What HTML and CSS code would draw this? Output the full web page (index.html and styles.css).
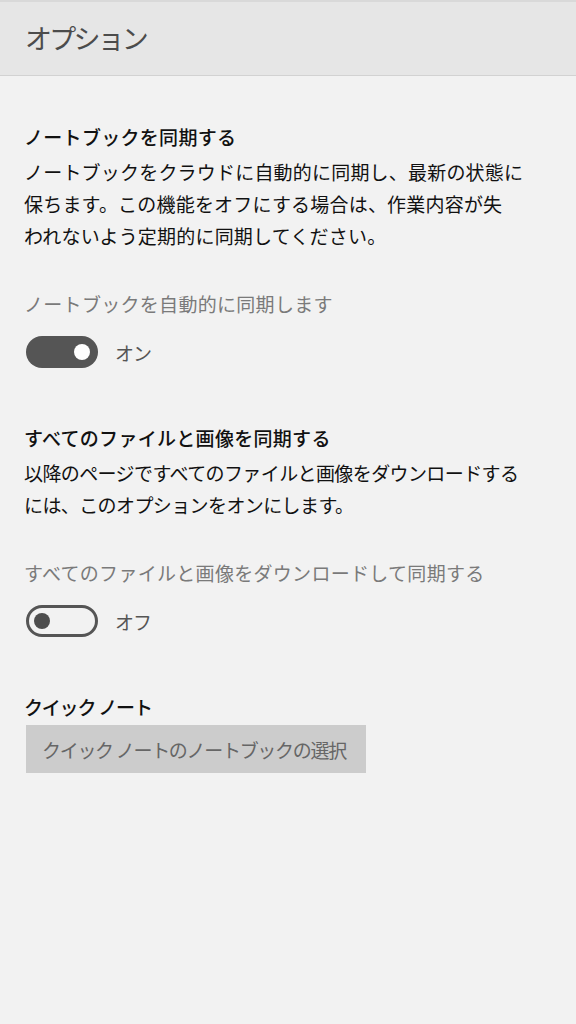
FILE: index.html
```html
<!DOCTYPE html>
<html lang="ja">
<head>
<meta charset="utf-8">
<link rel="stylesheet" href="styles.css">
</head>
<body>
<header class="header"><h1 class="title">オプション</h1></header>
<main class="content">
  <section class="section first">
    <h2 class="heading">ノートブックを同期する</h2>
    <p class="desc">ノートブックをクラウドに自動的に同期し、最新の状態に<br>保ちます。この機能をオフにする場合は、作業内容が失<br>われないよう定期的に同期してください。</p>
    <div class="label">ノートブックを自動的に同期します</div>
    <div class="toggle-row">
      <span class="toggle on"><span class="knob"></span></span>
      <span class="state">オン</span>
    </div>
  </section>
  <section class="section">
    <h2 class="heading">すべてのファイルと画像を同期する</h2>
    <p class="desc tight">以降のページですべてのファイルと画像をダウンロードする<br>には、このオプションをオンにします。</p>
    <div class="label">すべてのファイルと画像をダウンロードして同期する</div>
    <div class="toggle-row">
      <span class="toggle off"><span class="knob"></span></span>
      <span class="state">オフ</span>
    </div>
  </section>
  <section class="section">
    <h2 class="heading quick">クイック&nbsp;ノート</h2>
    <button class="select">クイック&nbsp;ノートのノートブックの選択</button>
  </section>
</main>
</body>
</html>
```
FILE: styles.css
```css
* { box-sizing: border-box; }
html, body { margin: 0; padding: 0; }
body {
  width: 576px;
  height: 1024px;
  background: #f2f2f2;
  font-family: "Noto Sans CJK JP", "Noto Sans", sans-serif;
  color: #000;
}
.header {
  height: 76px;
  background: #e6e6e6;
  border-top: 2px solid #d9d9d9;
  border-bottom: 1px solid #d2d2d2;
  display: flex;
  align-items: center;
  padding-left: 25px;
}
.title {
  margin: 0;
  font-size: 27px;
  font-weight: 400;
  letter-spacing: -2.8px;
  color: #4c4c4c;
  line-height: 36px;
  padding-bottom: 2px;
}
.content { padding: 0 24px; }
.section { padding-top: 54px; }
.section.first { padding-top: 45px; }
.heading {
  margin: 0 0 3px;
  font-size: 19px;
  font-weight: 500;
  line-height: 32px;
  letter-spacing: 0.3px;
  color: #111;
}
.heading.quick { margin-bottom: 2px; letter-spacing: -1.2px; }
.desc {
  margin: 0;
  font-size: 19px;
  line-height: 32px;
  letter-spacing: 0.2px;
  color: #111;
}
.desc.tight { letter-spacing: -0.6px; }
.label {
  margin-top: 36px;
  font-size: 19px;
  line-height: 32px;
  letter-spacing: 0.3px;
  color: #7a7a7a;
}
.toggle-row {
  margin-top: 16px;
  display: flex;
  align-items: center;
  height: 32px;
}
.toggle {
  width: 72px;
  height: 32px;
  border-radius: 16px;
  display: flex;
  align-items: center;
  padding: 0 8px;
  margin-left: 2px;
}
.toggle .knob {
  width: 16px;
  height: 16px;
  border-radius: 50%;
}
.toggle.on { background: #555; justify-content: flex-end; }
.toggle.on .knob { background: #fff; }
.toggle.off { border: 3px solid #555; padding: 0 5px; }
.toggle.off .knob { background: #4d4d4d; }
.state {
  margin-left: 17px;
  font-size: 19px;
  color: #555;
  letter-spacing: -1px;
}
.select {
  display: block;
  margin: 0 0 0 2px;
  width: 340px;
  height: 48px;
  border: none;
  background: #cccccc;
  font-family: inherit;
  font-size: 19px;
  letter-spacing: -1.3px;
  color: #666;
  text-align: left;
  padding: 0 0 0 16px;
}
```
